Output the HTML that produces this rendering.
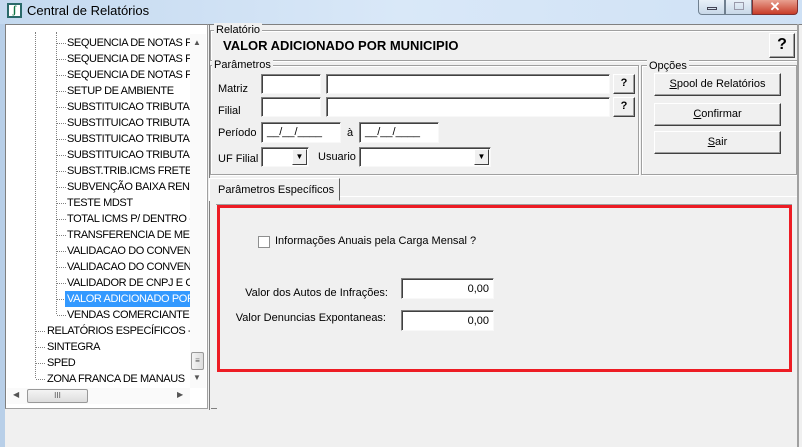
<!DOCTYPE html>
<html><head><meta charset="utf-8"><style>
*{box-sizing:border-box;margin:0;padding:0}
body{width:802px;height:447px;overflow:hidden;background:#f0f0f0;font-family:"Liberation Sans",sans-serif;font-size:11px;color:#000;position:relative}
.a{position:absolute;white-space:nowrap}
.title{left:0;top:0;width:802px;height:24px;background:linear-gradient(90deg,#c4d9ef,#d9e8f8 50%,#cfe1f5)}
.in{position:absolute;background:#fff;border:1px solid;border-color:#808080 #f8f8f8 #f8f8f8 #808080;box-shadow:inset 1px 1px 0 #404040;white-space:nowrap}
.btn{position:absolute;background:#f0f0f0;border:1px solid;border-color:#fff #404040 #404040 #fff;box-shadow:inset -1px -1px 0 #a0a0a0;text-align:center;font-size:11px}
.grp{position:absolute;border:1px solid #a0a0a0;box-shadow:1px 1px 0 #fff inset,1px 1px 0 #fff}
.lg{position:absolute;top:-8px;left:5px;background:#f0f0f0;padding:0 2px;font-size:11px;line-height:14px}
.ti{position:absolute;height:16px;line-height:16px;white-space:nowrap;font-size:11px;letter-spacing:-0.4px}
.dh{position:absolute;height:0;border-top:1px dotted #808080;width:9px}
.dv{position:absolute;width:0;border-left:1px dotted #808080}
.cb{position:absolute;width:15px;height:16px;background:#f0f0f0;border:1px solid;border-color:#fff #404040 #404040 #fff;font-size:8px;text-align:center;line-height:14px}
</style></head><body>
<div class="a title"></div>
<div class="a" style="left:7px;top:3px;width:15px;height:15px;background:#fff;border:2px solid #2a6a6a;font:bold 10px 'Liberation Serif';text-align:center;line-height:11px;color:#174">ʃ</div>
<div class="a" style="left:27px;top:3px;font-size:13px;color:#000">Central de Relatórios</div>
<div class="a" style="left:698px;top:0;width:27px;height:15px;border:1px solid #708090;border-top:none;border-radius:0 0 0 4px;background:linear-gradient(#e8f0f8,#c8d8e8)"><div class="a" style="left:8px;top:7px;width:10px;height:3px;border:1px solid #445"></div></div>
<div class="a" style="left:725px;top:0;width:27px;height:15px;border:1px solid #708090;border-top:none;background:linear-gradient(#e8f0f8,#c8d8e8)"><div class="a" style="left:8px;top:2px;width:10px;height:8px;border:1px solid #99a"></div></div>
<div class="a" style="left:752px;top:0;width:46px;height:15px;border:1px solid #803030;border-top:none;border-radius:0 0 4px 0;background:linear-gradient(#e8a090,#c83c28);color:#fff;font:bold 13px sans-serif;text-align:center;line-height:13px">✕</div>
<div class="a" style="left:0;top:24px;width:5px;height:423px;background:#b8cfe8"></div>
<div class="a" style="left:5px;top:24px;width:797px;height:423px;border-top:1px solid #808080"></div>
<div class="a" style="left:5px;top:24px;width:203px;height:385px;border:1px solid #808080;background:#fff;border-right-color:#a0a0a0;border-bottom-color:#a0a0a0"></div>
<div class="dv" style="left:35px;top:32px;height:346px"></div>
<div class="dv" style="left:56px;top:32px;height:282px"></div>
<div id="tree"></div>
<div class="a" style="left:190px;top:34px;width:16px;height:354px;background:#fafafa"></div>
<div class="a" style="left:193px;top:38px;color:#555;font-size:8px">▲</div>
<div class="a" style="left:193px;top:373px;color:#555;font-size:8px">▼</div>
<div class="a" style="left:191px;top:352px;width:13px;height:18px;border:1px solid #999;border-radius:2px;background:linear-gradient(90deg,#f4f4f4,#ddd);font-size:8px;text-align:center;line-height:16px;color:#555">≡</div>
<div class="a" style="left:7px;top:388px;width:183px;height:16px;background:#fafafa"></div>
<div class="a" style="left:13px;top:390px;color:#555;font-size:8px">◀</div>
<div class="a" style="left:177px;top:390px;color:#555;font-size:8px">▶</div>
<div class="a" style="left:27px;top:389px;width:61px;height:14px;border:1px solid #999;border-radius:2px;background:linear-gradient(#f4f4f4,#ddd);font-size:8px;text-align:center;line-height:12px;color:#555">III</div>
<div class="a" style="left:209px;top:24px;width:1px;height:386px;background:#808080"></div>
<div class="a" style="left:211px;top:408px;width:6px;height:1px;background:#808080"></div>
<div class="grp" style="left:210px;top:30px;width:588px;height:31px"><div class="lg" style="left:3px">Relatório</div></div>
<div class="a" style="left:223px;top:38px;font-weight:bold;font-size:13px">VALOR ADICIONADO POR MUNICIPIO</div>
<div class="btn" style="left:769px;top:33px;width:26px;height:25px;font-weight:bold;font-size:16px;line-height:22px">?</div>
<div class="grp" style="left:210px;top:65px;width:429px;height:110px"><div class="lg" style="left:1px">Parâmetros</div></div>
<div class="a" style="left:218px;top:83px">Matriz</div>
<div class="in" style="left:261px;top:74px;width:60px;height:20px"></div>
<div class="in" style="left:326px;top:74px;width:284px;height:20px"></div>
<div class="btn" style="left:613px;top:74px;width:22px;height:20px;font-weight:bold;line-height:17px">?</div>
<div class="a" style="left:218px;top:105px">Filial</div>
<div class="in" style="left:261px;top:97px;width:60px;height:20px"></div>
<div class="in" style="left:326px;top:97px;width:284px;height:20px"></div>
<div class="btn" style="left:613px;top:97px;width:22px;height:20px;font-weight:bold;line-height:17px">?</div>
<div class="a" style="left:218px;top:127px">Período</div>
<div class="in" style="left:261px;top:122px;width:80px;height:21px;padding:3px 0 0 5px">__/__/____</div>
<div class="a" style="left:347px;top:127px">à</div>
<div class="in" style="left:359px;top:122px;width:80px;height:21px;padding:3px 0 0 5px">__/__/____</div>
<div class="a" style="left:218px;top:153px">UF Filial</div>
<div class="in" style="left:261px;top:147px;width:48px;height:20px"><div class="cb" style="right:1px;top:1px;height:16px">▼</div></div>
<div class="a" style="left:318px;top:151px">Usuario</div>
<div class="in" style="left:359px;top:147px;width:132px;height:20px"><div class="cb" style="right:1px;top:1px;height:16px">▼</div></div>
<div class="grp" style="left:641px;top:65px;width:156px;height:110px"><div class="lg" style="left:5px;top:-7px">Opções</div></div>
<div class="btn" style="left:654px;top:73px;width:127px;height:23px;line-height:21px"><u>S</u>pool de Relatórios</div>
<div class="btn" style="left:654px;top:103px;width:127px;height:23px;line-height:21px"><u>C</u>onfirmar</div>
<div class="btn" style="left:654px;top:131px;width:127px;height:23px;line-height:21px"><u>S</u>air</div>
<div class="a" style="left:209px;top:178px;width:131px;height:23px;border:1px solid;border-color:#fff #606060 transparent #fff;background:#f0f0f0;padding:5px 0 0 8px">Parâmetros Específicos</div>
<div class="a" style="left:340px;top:196px;width:458px;height:1px;background:#fff"></div>
<div class="a" style="left:797px;top:24px;width:2px;height:423px;background:#a0a0a0"></div>
<div class="a" style="left:216px;top:204px;width:576px;height:1px;background:#a0a0a0"></div>
<div class="a" style="left:217px;top:205px;width:575px;height:167px;border:3px solid #ed1c24"></div>
<div class="a" style="left:258px;top:236px;width:12px;height:12px;background:#fff;border:1px solid #8e8f8f"></div>
<div class="a" style="left:275px;top:235px">Informações Anuais pela Carga Mensal ?</div>
<div class="a" style="left:200px;top:287px;width:188px;text-align:right">Valor dos Autos de Infrações:</div>
<div class="in" style="left:401px;top:278px;width:93px;height:21px;text-align:right;padding:4px 4px 0 0">0,00</div>
<div class="a" style="left:200px;top:312px;width:186px;text-align:right">Valor Denuncias Expontaneas:</div>
<div class="in" style="left:401px;top:310px;width:93px;height:21px;text-align:right;padding:4px 4px 0 0">0,00</div>
<script>
var items=[["SEQUENCIA DE NOTAS FI",3],["SEQUENCIA DE NOTAS FI",3],["SEQUENCIA DE NOTAS FI",3],["SETUP DE AMBIENTE",3],["SUBSTITUICAO TRIBUTAI",3],["SUBSTITUICAO TRIBUTAI",3],["SUBSTITUICAO TRIBUTAI",3],["SUBSTITUICAO TRIBUTAI",3],["SUBST.TRIB.ICMS FRETE",3],["SUBVENÇÃO BAIXA REND",3],["TESTE MDST",3],["TOTAL ICMS P/ DENTRO -",3],["TRANSFERENCIA DE MER",3],["VALIDACAO DO CONVENI",3],["VALIDACAO DO CONVENI",3],["VALIDADOR DE CNPJ E CI",3],["VALOR ADICIONADO POR",3],["VENDAS COMERCIANTE E",3],["RELATÓRIOS ESPECÍFICOS -",2],["SINTEGRA",2],["SPED",2],["ZONA FRANCA DE MANAUS",2]];
var h="";items.forEach(function(it,i){var y=35+i*16;var x=it[1]==3?67:47;var lx=it[1]==3?57:36;
h+='<div class="dh" style="left:'+lx+'px;top:'+(y+8)+'px"></div>';
var sel=i==16;h+='<div class="ti" style="left:'+(x-2)+'px;top:'+y+'px;width:'+(190-x+2)+'px;overflow:hidden;padding-left:2px;'+(sel?'background:#3399ff;color:#fff':'')+'">'+it[0]+'</div>';});
document.getElementById("tree").innerHTML=h;
</script>
</body></html>
